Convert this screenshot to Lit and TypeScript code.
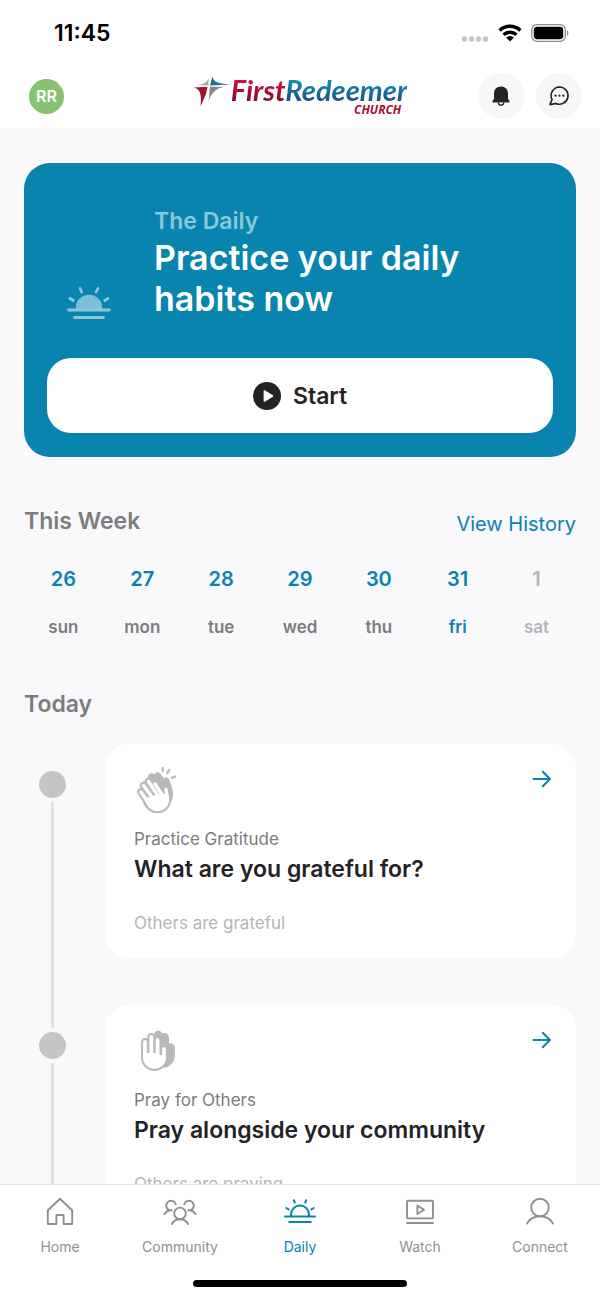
import { LitElement, html, css, svg } from "lit";
import { customElement, property } from "lit/decorators.js";
import { classMap } from "lit/directives/class-map.js";

interface Day {
  date: number;
  name: string;
  today?: boolean;
  upcoming?: boolean;
}

interface Habit {
  icon: string;
  label: string;
  title: string;
  note: string;
}

const DAYS: Day[] = [
  { date: 26, name: "sun" },
  { date: 27, name: "mon" },
  { date: 28, name: "tue" },
  { date: 29, name: "wed" },
  { date: 30, name: "thu" },
  { date: 31, name: "fri", today: true },
  { date: 1, name: "sat", upcoming: true },
];

const HABITS: Habit[] = [
  {
    icon: "clap",
    label: "Practice Gratitude",
    title: "What are you grateful for?",
    note: "Others are grateful",
  },
  {
    icon: "pray",
    label: "Pray for Others",
    title: "Pray alongside your community",
    note: "Others are praying",
  },
];

const TABS = [
  { icon: "home", label: "Home" },
  { icon: "community", label: "Community" },
  { icon: "daily", label: "Daily" },
  { icon: "watch", label: "Watch" },
  { icon: "connect", label: "Connect" },
];

// width, height and drawing of each icon
const ICONS: Record<string, [number, number, unknown]> = {
  signal: [28, 18, svg`
    <g fill="#c4c4c6">
      <circle cx="3.500" cy="15" r="2.700" /><circle cx="10.500" cy="15" r="2.700" />
      <circle cx="17.500" cy="15" r="2.700" /><circle cx="24.500" cy="15" r="2.700" />
    </g>`],
  wifi: [24, 18, svg`
    <g fill="none" stroke="currentColor" stroke-width="3.4">
      <path d="M1.6 6.4a15 15 0 0 1 20.8 0" />
      <path d="M5.6 10.8a9.2 9.2 0 0 1 12.8 0" />
    </g>
    <path d="M12 17.6 8.1 13.6a5.6 5.6 0 0 1 7.8 0Z" fill="currentColor" />`],
  battery: [38, 18, svg`
    <rect x="0.7" y="0.7" width="33.6" height="16.6" rx="5.2" fill="none" stroke="#8e8e90" stroke-width="1.3" />
    <rect x="2.8" y="2.8" width="29.4" height="12.4" rx="3.4" fill="currentColor" />
    <path d="M36 6.2c1.8.6 1.8 5 0 5.6Z" fill="#8e8e90" />`],
  bell: [20, 22, svg`
    <path d="M10 1.4c-4.3 0-7 3-7 7v5.2c0 1.2-1.6 1.8-1.6 3.2 0 .5.3.7.8.7h15.6c.5 0 .8-.2.8-.7 0-1.4-1.6-2-1.6-3.200V8.400c0-4-2.700-7-7-7Z" fill="currentColor" />
    <path d="M7.3 17.5a2.7 2.7 0 0 0 5.4 0" fill="none" stroke="currentColor" stroke-width="1.3" />`],
  chat: [22, 22, svg`
    <path d="M11.5 2a8.6 8.6 0 1 1-3.7 16.4L2.6 19.6a.5.5 0 0 1-.5-.8l2-4.2A8.6 8.6 0 0 1 11.5 2Z" fill="none" stroke="currentColor" stroke-width="1.6" stroke-linejoin="round" />
    <circle cx="7.6" cy="10.7" r="1.1" fill="currentColor" /><circle cx="11.5" cy="10.7" r="1.1" fill="currentColor" /><circle cx="15.4" cy="10.7" r="1.1" fill="currentColor" />`],
  sunrise: [44, 34, svg`
    <path d="M8.7 25v-2a13.3 13.3 0 0 1 26.6 0V25Z" fill="currentColor" opacity="0.9" />
    <g fill="none" stroke="currentColor" stroke-width="2.8" stroke-linecap="round">
      <path d="M1.6 25h40.8M7.6 32.500h28.800M13 3.500l1.700 3.500M30.900 3.500l-1.700 3.500M3 13.500l3.300 2M41 13.500l-3.300 2" />
    </g>`],
  play: [28, 28, svg`
    <circle cx="14" cy="14" r="14" fill="currentColor" />
    <path d="M11.4 9v10l8-5Z" fill="#fff" stroke="#fff" stroke-width="1.6" stroke-linejoin="round" />`],
  arrow: [20, 20, svg`
    <path d="M1.5 10h16.500M10.800 2.800 18 10l-7.200 7.200" fill="none" stroke="currentColor" stroke-width="2" stroke-linecap="round" stroke-linejoin="round" />`],
  clap: [46, 50, svg`
    <g transform="translate(2 0)">
      <path d="M8 17 12 10.5C13 7 16 6.500 18.500 8.500 19.500 5.500 23.500 5.500 25.500 9L28 12.500C29.500 10.500 32.500 11.200 33.500 14L36 22C38 28 37 34 33.500 38L20 30Z" fill="currentColor" />
      <g fill="none" stroke="currentColor" stroke-width="7.6" stroke-linecap="round" stroke-linejoin="round">
        <path d="M5 26 11 35M7.500 19.500 15 30M12.500 15.500 20 27M19 18 25 28M30 23.500 31.500 32" />
        <path d="M10 33C11 39 16 43.500 21 43.500 27.500 43.500 32 39 31.500 31L26 28 14 28Z" />
      </g>
      <path d="M10.500 33C11.500 39 16 43.500 21 43.500 27.500 43.500 32 39 31.500 32L28 29 22 30 13 33Z" fill="#fff" stroke="#fff" stroke-width="3.200" stroke-linejoin="round" />
      <path d="M5 26 11 35M7.500 19.500 16 31M12.500 15.500 22 30M19 18 27 30M30 23.500 31.500 32" fill="none" stroke="#fff" stroke-width="3.400" stroke-linecap="round" />
    </g>
    <path d="M28.500 2l.3 3.200M35.200 4l-2 3M41 10.600l-3.200 1.200" fill="none" stroke="currentColor" stroke-width="2.400" stroke-linecap="round" />`],
  pray: [46, 50, svg`
    <g transform="translate(2 0)">
      <path d="M18 8C18 2.500 25.500 2.500 26 6.500 29 5 33 7 33 11V16.500C36 15.800 39 17.500 39 21V27C39 34 35 39 29 41L18 30Z" fill="currentColor" />
      <g fill="none" stroke="currentColor" stroke-width="8" stroke-linecap="round" stroke-linejoin="round">
        <path d="M9 15V30M15.300 10V30M21.600 13V30M28 22V31" />
        <path d="M9 28V31C9 36 13.500 40 18.500 40S28 36 28 31V28Z" />
      </g>
      <path d="M9 28V31C9 36 13.500 40 18.500 40S28 36 28 31V30H21.600V28Z" fill="#fff" stroke="#fff" stroke-width="3.800" stroke-linejoin="round" />
      <path d="M9 15V30M15.300 10V30M21.600 13V30M28 22V31" fill="none" stroke="#fff" stroke-width="3.800" stroke-linecap="round" />
    </g>`],
  home: [34, 34, svg`
    <path d="M17 4.8 29.2 16.500V30H20.600V21H13.400V30H4.800V16.500Z" fill="none" stroke="currentColor" stroke-width="1.900" stroke-linejoin="round" />`],
  community: [34, 34, svg`
    <g fill="none" stroke="currentColor" stroke-width="1.9" stroke-linecap="round">
      <circle cx="17" cy="19.4" r="5.8" />
      <path d="M9 30c1.600-3.200 4.500-4.800 8-4.800s6.400 1.600 8 4.800" />
      <path d="M12.800 10.400A4.900 4.900 0 1 0 6.600 16.300C4.300 16.800 2.400 18.300 1.400 20.200M6.600 16.300l2-.1" />
      <path d="M21.200 10.400A4.900 4.900 0 1 1 27.400 16.300C29.700 16.800 31.600 18.300 32.600 20.200M27.400 16.300l-2-.1" />
    </g>`],
  daily: [34, 34, svg`
    <g fill="none" stroke="currentColor" stroke-width="2" stroke-linecap="round">
      <path d="M2 22.4h30M6.200 28h21.600M8 22v-1.500a9 9 0 0 1 18 0V22M10.800 6.200l1 2.300M23.200 6.200l-1 2.300M3.200 14l2.400 1.400M30.800 14l-2.400 1.400" />
    </g>`],
  watch: [34, 34, svg`
    <g fill="none" stroke="currentColor" stroke-width="1.9" stroke-linecap="round" stroke-linejoin="round">
      <rect x="4" y="6.8" width="26" height="17.6" rx="0.8" />
      <path d="M4 29h26M14.400 11.600v8.400l6.600-4.200Z" />
    </g>`],
  connect: [34, 34, svg`
    <g fill="none" stroke="currentColor" stroke-width="1.9" stroke-linecap="round">
      <circle cx="17" cy="13.500" r="8.800" />
      <path d="M4 29.600C6.600 24.800 11.400 22.200 17 22.200S27.400 24.800 30 29.600" />
    </g>`],
  star: [38, 32, svg`
    <defs>
      <linearGradient id="g" x1="0" y1="0" x2="1" y2="1"><stop offset="0" stop-color="#77787b" /><stop offset="1" stop-color="#b9babc" /></linearGradient>
    </defs>
    <path d="M15.500 2.500V9.200H2.500C9 8.300 13.500 8 15.500 2.500Z" fill="#a3a4a7" />
    <path d="M19.500.5C20.500 6 24 7.300 37 8.600L17 9.400Z" fill="#17718f" />
    <path d="M.5 11.500 14.500 10.800 13 18 7.500 30.500C8.500 21 8.500 13 .5 11.500Z" fill="#a3122f" />
    <path d="M17 10.800H31C25 12.500 18 15.500 15.500 26Z" fill="url(#g)" />`],
};

@customElement("app-icon")
export class AppIcon extends LitElement {
  static styles = css`
    :host {
      display: block;
      flex: none;
    }
    svg {
      display: block;
    }
  `;

  @property() name = "";

  render() {
    const [w, h, shape] = ICONS[this.name];
    return html`<svg width=${w} height=${h} viewBox="0 0 ${w} ${h}" aria-hidden="true">${shape}</svg>`;
  }
}

@customElement("habit-card")
export class HabitCard extends LitElement {
  static styles = css`
    :host {
      display: grid;
      grid-template-columns: 57px 1fr;
      column-gap: 24px;
    }
    .rail {
      display: flex;
      flex-direction: column;
      align-items: center;
      gap: 4px;
      padding-top: 27px;
    }
    .dot {
      width: 27px;
      height: 27px;
      border-radius: 50%;
      background: #c5c5c7;
    }
    .line {
      width: 3px;
      flex: 1;
      margin-bottom: -23px;
      background: #e2e2e4;
    }
    .card {
      margin-bottom: 47px;
      padding: 22px 24px 22px 29px;
      border-radius: 24px;
      background: #fff;
      color: #232326;
      text-decoration: none;
    }
    .top {
      display: flex;
      justify-content: space-between;
      align-items: flex-start;
      margin-bottom: 10px;
      color: #b9b9bb;
    }
    .arrow {
      padding-top: 3px;
      color: #0982ad;
    }
    p,
    h3 {
      margin: 0;
    }
    .label,
    .note {
      font-size: 17px;
      line-height: 26px;
      color: #7c7c7f;
    }
    .title {
      font-size: 23px;
      line-height: 34px;
      font-weight: 600;
    }
    .note {
      margin-top: 24px;
      color: #b5b5b8;
    }
  `;

  @property({ type: Object }) habit?: Habit;

  render() {
    if (!this.habit) return null;
    const { icon, label, title, note } = this.habit;
    return html`
      <div class="rail">
        <span class="dot"></span>
        <span class="line"></span>
      </div>
      <a class="card" href="#${icon}">
        <div class="top">
          <app-icon name=${icon}></app-icon>
          <app-icon class="arrow" name="arrow"></app-icon>
        </div>
        <p class="label">${label}</p>
        <h3 class="title">${title}</h3>
        <p class="note">${note}</p>
      </a>
    `;
  }
}

@customElement("app-root")
export class AppRoot extends LitElement {
  static styles = css`
    :host {
      display: flex;
      flex-direction: column;
      height: 100vh;
      font-family: Inter, "Liberation Sans", sans-serif;
      background: #f9f9fc;
      color: #232326;
    }
    button {
      border: 0;
      padding: 0;
      font: inherit;
      color: inherit;
      cursor: pointer;
    }
    a {
      text-decoration: none;
    }
    h1,
    h2,
    p,
    ol {
      margin: 0;
      padding: 0;
      list-style: none;
    }
    .top {
      background: #fff;
    }
    .status {
      display: flex;
      align-items: center;
      gap: 9px;
      height: 62px;
      padding: 2px 31px 0 54px;
      color: #000;
    }
    .time {
      margin-right: auto;
      font-size: 23px;
      font-weight: 600;
    }
    .bar {
      display: grid;
      grid-template-columns: 1fr auto 1fr;
      align-items: center;
      height: 64px;
      padding: 0 18px;
    }
    .avatar {
      width: 35px;
      height: 35px;
      margin-left: 11px;
      border-radius: 50%;
      background: #87c171;
      color: #fff;
      font-size: 16px;
      font-weight: 600;
    }
    .logo {
      display: flex;
      align-items: flex-start;
      font-family: Lato, "Open Sans", sans-serif;
      font-style: italic;
      font-weight: 700;
    }
    .words {
      display: flex;
      flex-direction: column;
      align-items: flex-end;
    }
    .name {
      font-size: 29px;
      line-height: 28px;
    }
    .first,
    .redeemer {
      background: linear-gradient(#d8103a 20%, #7d0f2a 85%);
      -webkit-background-clip: text;
      background-clip: text;
      color: transparent;
    }
    .redeemer {
      background-image: linear-gradient(#1596bb 15%, #1c4f85 85%);
    }
    .church {
      padding-right: 6px;
      font-family: "Open Sans", sans-serif;
      font-size: 12px;
      line-height: 12px;
      color: #a3122f;
    }
    .actions {
      display: flex;
      justify-content: flex-end;
      gap: 12px;
    }
    .round {
      display: grid;
      place-items: center;
      width: 46px;
      height: 46px;
      border-radius: 50%;
      background: #f6f7f7;
    }
    main {
      flex: 1;
      min-height: 0;
      padding: 35px 24px 0;
      overflow-y: auto;
      scrollbar-width: none;
    }
    .hero {
      padding: 42px 23px 24px;
      border-radius: 26px;
      background: #0984ae;
      color: #fff;
    }
    .intro {
      display: flex;
      align-items: flex-end;
      gap: 43px;
      padding: 0 20px;
      color: #8bc7da;
    }
    .kicker {
      font-size: 23px;
      line-height: 32px;
      font-weight: 600;
    }
    .headline {
      font-size: 34px;
      line-height: 41px;
      font-weight: 600;
      color: #fff;
    }
    .start {
      display: flex;
      align-items: center;
      justify-content: center;
      gap: 12px;
      width: 100%;
      height: 75px;
      margin-top: 39px;
      border-radius: 24px;
      background: #fff;
      color: #232326;
      font-size: 23px;
      font-weight: 600;
    }
    .heading {
      display: flex;
      justify-content: space-between;
      align-items: flex-end;
      margin-top: 48px;
    }
    h2 {
      font-size: 23px;
      line-height: 32px;
      font-weight: 600;
      color: #7c7c7f;
    }
    .history {
      font-size: 20px;
      line-height: 26px;
      color: #0982ad;
    }
    .week {
      display: grid;
      grid-template-columns: repeat(7, 1fr);
      margin-top: 28px;
      text-align: center;
      font-weight: 600;
    }
    .date {
      display: block;
      font-size: 20px;
      line-height: 28px;
      color: #0982ad;
    }
    .day {
      display: block;
      margin-top: 21px;
      font-size: 17px;
      line-height: 26px;
      color: #7c7c7f;
    }
    .today .day {
      color: #0982ad;
    }
    .upcoming .date,
    .upcoming .day {
      color: #b5b5b8;
    }
    .list {
      margin-top: 24px;
    }
    .tabs {
      display: grid;
      grid-template-columns: repeat(5, 1fr);
      padding-top: 9px;
    }
    footer {
      border-top: 1px solid #e4e4e7;
      background: #fff;
    }
    .tab {
      display: flex;
      flex-direction: column;
      align-items: center;
      gap: 9px;
      font-size: 14px;
      line-height: 20px;
      color: #8f8f91;
    }
    .tab.active {
      color: #0982ad;
    }
    .indicator {
      width: 214px;
      height: 7px;
      margin: 23px auto 12px;
      border-radius: 4px;
      background: #000;
    }
  `;

  render() {
    return html`
      <header class="top">
        <div class="status">
          <span class="time">11:45</span>
          <app-icon name="signal"></app-icon>
          <app-icon name="wifi"></app-icon>
          <app-icon name="battery"></app-icon>
        </div>
        <div class="bar">
          <button class="avatar">RR</button>
          <div class="logo">
            <app-icon name="star"></app-icon>
            <div class="words">
              <span class="name"><span class="first">First</span><span class="redeemer">Redeemer</span></span>
              <span class="church">CHURCH</span>
            </div>
          </div>
          <div class="actions">
            <button class="round" aria-label="Notifications"><app-icon name="bell"></app-icon></button>
            <button class="round" aria-label="Messages"><app-icon name="chat"></app-icon></button>
          </div>
        </div>
      </header>
      <main>
        <section class="hero">
          <div class="intro">
            <app-icon name="sunrise"></app-icon>
            <div>
              <p class="kicker">The Daily</p>
              <h1 class="headline">Practice your daily habits now</h1>
            </div>
          </div>
          <button class="start"><app-icon name="play"></app-icon>Start</button>
        </section>
        <div class="heading">
          <h2>This Week</h2>
          <a class="history" href="#history">View History</a>
        </div>
        <ol class="week">
          ${DAYS.map(
            (d) => html`
              <li class=${classMap({ today: !!d.today, upcoming: !!d.upcoming })}>
                <span class="date">${d.date}</span>
                <span class="day">${d.name}</span>
              </li>
            `
          )}
        </ol>
        <div class="heading">
          <h2>Today</h2>
        </div>
        <div class="list">
          ${HABITS.map((h) => html`<habit-card .habit=${h}></habit-card>`)}
        </div>
      </main>
      <footer>
        <nav class="tabs">
          ${TABS.map(
            (t) => html`
              <a class=${classMap({ tab: true, active: t.icon === "daily" })} href="#${t.icon}">
                <app-icon name=${t.icon}></app-icon>
                ${t.label}
              </a>
            `
          )}
        </nav>
        <div class="indicator"></div>
      </footer>
    `;
  }
}

declare global {
  interface HTMLElementTagNameMap {
    "app-root": AppRoot;
    "app-icon": AppIcon;
    "habit-card": HabitCard;
  }
}
